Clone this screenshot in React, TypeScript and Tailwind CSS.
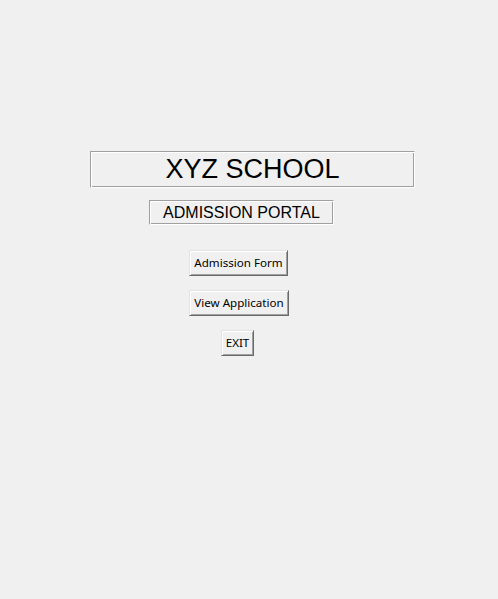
const groove =
  "border border-t-[#a0a0a0] border-l-[#a0a0a0] border-b-white border-r-white shadow-[inset_1px_1px_0_#ffffff,inset_-1px_-1px_0_#a0a0a0]";

const raised =
  "border border-t-[#e3e3e3] border-l-[#e3e3e3] border-b-[#696969] border-r-[#696969] shadow-[inset_1px_1px_0_#ffffff,inset_-1px_-1px_0_#a0a0a0] bg-[#f0f0f0] text-[11.6px] text-black flex items-center justify-center font-['Noto_Sans',sans-serif]";

export default function App() {
  return (
    <div className="w-[498px] h-[599px] bg-[#f0f0f0] flex flex-col items-start pt-[151px] font-['Liberation_Sans',Arial,sans-serif] text-black">
      <div className={`${groove} ml-[90px] w-[325px] h-[37px] flex items-center justify-center text-[27px] leading-none`}>
        XYZ SCHOOL
      </div>
      <div className={`${groove} ml-[149px] mt-[12px] w-[185px] h-[25px] flex items-center justify-center text-[16px] leading-none`}>
        ADMISSION PORTAL
      </div>
      <button className={`${raised} ml-[189px] mt-[25px] w-[99px] h-[26px]`}>
        Admission Form
      </button>
      <button className={`${raised} ml-[189px] mt-[14px] w-[100px] h-[26px]`}>
        View Application
      </button>
      <button className={`${raised} ml-[221px] mt-[14px] w-[33px] h-[26px]`}>
        EXIT
      </button>
    </div>
  );
}
